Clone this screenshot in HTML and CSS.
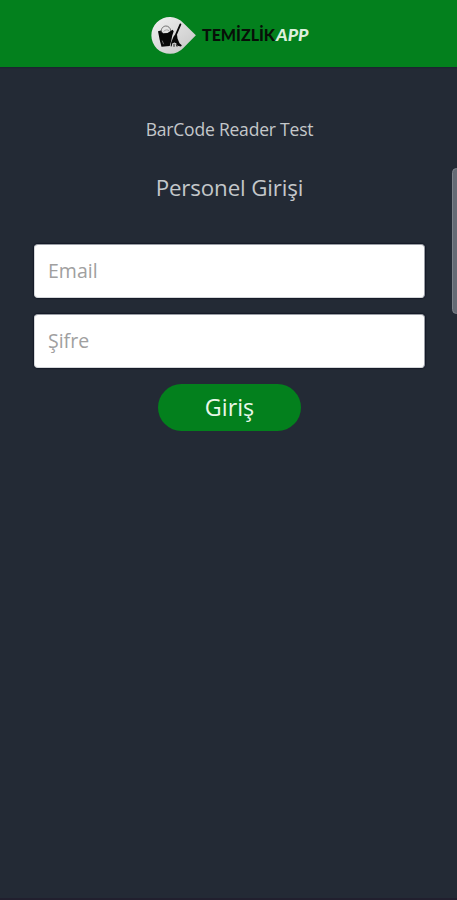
FILE: index.html
```html
<!DOCTYPE html>
<html lang="tr">
<head>
<meta charset="utf-8">
<title>TemizlikApp</title>
<link rel="stylesheet" href="styles.css">
</head>
<body>
<header class="topbar">
  <svg class="brand" width="160" height="42" viewBox="0 0 160 42" role="img" aria-label="TemizlikApp">
    <defs><linearGradient id="drop" x1="0" y1="0" x2="1" y2="1"><stop offset="0" stop-color="#f2f2f2"/><stop offset="1" stop-color="#c4c4c4"/></linearGradient></defs>
    <path d="M33 7.5 45.8 20 33 33A18.8 18.8 0 1 1 33 7.5Z" transform="translate(1 .6) scale(.98)" fill="url(#drop)"/>
    <path d="M8 16.3 11 15.6l2 2.6 4.5-.3 5-3.2 1.2 1.6-1.5 4.4-1 5.2-1.5 5.2-8.2.7-1.9-7.4Z" fill="#080808"/>
    <path d="M11.2 17.5C10.5 9.5 20 8.8 20.8 16" fill="none" stroke="#555" stroke-width=".8"/>
    <path d="M13.5 16.6c1.8-2.2 4.3-2.1 5.6-.8" fill="none" stroke="#999" stroke-width=".8"/>
    <path d="m12.2 25.6 1.4 3.6" stroke="#aaa" stroke-width=".6"/>
    <path d="m30.4 9.4-4.4 10.2" stroke="#080808" stroke-width="1.8" stroke-linecap="round"/>
    <path d="m23.6 21.4 1.5-2 2 .8.4 3.2 2 4.8 2.3 2-.8 1.2-3.6-.6-1-2.4-1.8-.8-2.2.6-.8 3.2-1-.2.6-4Z" fill="#080808"/>
    <path d="M24 28.8v3M26.2 29.2l.9 2.5" fill="none" stroke="#080808" stroke-width=".9"/>
    <text class="brand-name" x="52" y="26.3" textLength="73" lengthAdjust="spacingAndGlyphs">TEMİZLİK</text>
    <text class="brand-app" x="126" y="26.3" textLength="32.5" lengthAdjust="spacingAndGlyphs">APP</text>
  </svg>
</header>
<main class="login">
  <p class="subtitle">BarCode Reader Test</p>
  <h1 class="title">Personel Girişi</h1>
  <form class="form">
    <input class="field" type="email" placeholder="Email" aria-label="Email">
    <input class="field" type="password" placeholder="Şifre" aria-label="Şifre">
    <button class="submit" type="button">Giriş</button>
  </form>
</main>
<div class="edge-handle"></div>
</body>
</html>
```
FILE: styles.css
```css
* { box-sizing: border-box; }
body {
  margin: 0;
  height: 900px;
  overflow: hidden;
  display: flex;
  flex-direction: column;
  position: relative;
  background: #232a35;
  border-bottom: 2px solid #211f2e;
  font-family: "Open Sans", sans-serif;
}
.topbar {
  height: 67px;
  flex: none;
  display: flex;
  justify-content: center;
  padding-top: 15px;
  background: #03801d;
  box-shadow: 0 1px 1px #1d2531;
}
.brand { display: block; margin-left: 3px; }
.brand-name, .brand-app {
  font-family: Lato, sans-serif;
  font-size: 17.8px;
  font-weight: 900;
  fill: #071008;
}
.brand-app { font-style: italic; fill: #dcefdc; }
.login {
  display: flex;
  flex-direction: column;
  align-items: center;
  padding: 49px 32px 0 34px;
}
.subtitle {
  margin: 0;
  font-size: 17.5px;
  letter-spacing: -.2px;
  line-height: 26px;
  color: #c3c7ca;
}
.title {
  margin: 29px 0 0;
  font-size: 22.3px;
  letter-spacing: -.12px;
  font-weight: 400;
  line-height: 33px;
  color: #c3c7ca;
}
.form {
  width: 100%;
  margin-top: 40px;
  display: flex;
  flex-direction: column;
  align-items: center;
  gap: 16px;
}
.field {
  width: 100%;
  height: 54px;
  padding: 0 13px 1px;
  border: 1px solid #9a9ea5;
  border-left-color: #d5d7da;
  border-bottom-color: #d5d7da;
  border-radius: 4px;
  outline: 0;
  background: #fff;
  box-shadow: 0 0 1px 1px #141a27;
  font: 19.5px "Open Sans", sans-serif;
}
.field::placeholder { color: #a0a0a0; opacity: 1; }
.submit {
  width: 143px;
  height: 47px;
  padding: 0 0 1px;
  border: 0;
  border-radius: 24px;
  background: #03801d;
  color: #e9f8e9;
  font: 23.3px "Open Sans", sans-serif;
}
.edge-handle {
  position: absolute;
  top: 168px;
  right: -4px;
  width: 9px;
  height: 146px;
  border: 1px solid #7d828a;
  border-radius: 5px;
  background: #646a74;
}
```
